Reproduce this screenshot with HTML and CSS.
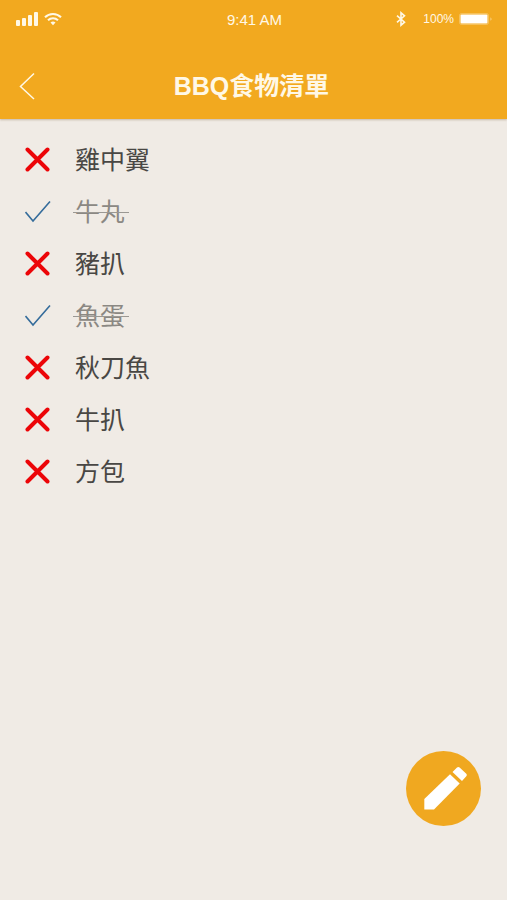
FILE: index.html
```html
<!DOCTYPE html>
<html lang="zh-Hant">
<head>
  <meta charset="utf-8">
  <meta name="viewport" content="width=device-width, initial-scale=1">
  <title>BBQ食物清單</title>
  <link rel="stylesheet" href="styles.css">
</head>
<body>
  <header class="header">
    <div class="status">
      <div class="status-left">
        <svg width="23" height="14" viewBox="0 0 23 14" fill="currentColor" aria-hidden="true">
          <rect x="0" y="8" width="4" height="6" rx="1"/>
          <rect x="6" y="6" width="4" height="8" rx="1"/>
          <rect x="12" y="3" width="4" height="11" rx="1"/>
          <rect x="18" y="0" width="4" height="14" rx="1"/>
        </svg>
        <svg width="18" height="14" viewBox="0 0 18 14" fill="none" stroke="currentColor" stroke-width="2" aria-hidden="true">
          <path d="M1 5.2a11.3 11.3 0 0 1 16 0"/>
          <path d="M4 8.3a7 7 0 0 1 10 0"/>
          <path d="M9 13.2l-2.5-2.6a3.6 3.6 0 0 1 5 0z" fill="currentColor" stroke="none"/>
        </svg>
      </div>
      <time class="clock">9:41 AM</time>
      <div class="status-right">
        <svg class="bluetooth" width="10" height="16" viewBox="0 0 10 16" fill="none" stroke="currentColor" stroke-width="1.6" aria-hidden="true">
          <path d="M1 4.6l7.500 6.600L5 14.200V1.800l3.500 3L1 11.400"/>
        </svg>
        <span class="percent">100%</span>
        <svg width="34" height="12" viewBox="0 0 34 12" aria-hidden="true">
          <rect x=".5" y=".5" width="29" height="11" rx="2" fill="none" stroke="currentColor" stroke-opacity=".3"/>
          <rect x="1.500" y="1.500" width="27" height="9" rx="1" fill="#fff"/>
          <path d="M31.500 4.200q2 1.800 0 3.600z" fill="currentColor" opacity=".6"/>
        </svg>
      </div>
    </div>
    <div class="nav">
      <button class="back" type="button" aria-label="返回">
        <svg width="16" height="28" viewBox="0 0 16 28" fill="none" stroke="currentColor" stroke-width="1.5" aria-hidden="true">
          <path d="M15 1.500L1.500 14.500L15 27"/>
        </svg>
      </button>
      <h1 class="title">BBQ食物清單</h1>
    </div>
  </header>

  <svg class="symbols" aria-hidden="true">
    <symbol id="cross" viewBox="0 0 26 26">
      <path d="M2.500 2.500L22.500 22.500M22.500 2.500L2.500 22.500" fill="none" stroke="#ec0508" stroke-width="4" stroke-linecap="round"/>
    </symbol>
    <symbol id="tick" viewBox="0 0 26 26">
      <path d="M.5 13L8 22L25 2.500" fill="none" stroke="#356c9b" stroke-width="1.600"/>
    </symbol>
  </svg>

  <main>
    <ul class="list">
      <li><label class="item"><span class="mark"><input type="checkbox"><svg><use href="#cross"/></svg></span><span class="name">雞中翼</span></label></li>
      <li><label class="item done"><span class="mark"><input type="checkbox" checked><svg><use href="#tick"/></svg></span><span class="name">牛丸</span></label></li>
      <li><label class="item"><span class="mark"><input type="checkbox"><svg><use href="#cross"/></svg></span><span class="name">豬扒</span></label></li>
      <li><label class="item done"><span class="mark"><input type="checkbox" checked><svg><use href="#tick"/></svg></span><span class="name">魚蛋</span></label></li>
      <li><label class="item"><span class="mark"><input type="checkbox"><svg><use href="#cross"/></svg></span><span class="name">秋刀魚</span></label></li>
      <li><label class="item"><span class="mark"><input type="checkbox"><svg><use href="#cross"/></svg></span><span class="name">牛扒</span></label></li>
      <li><label class="item"><span class="mark"><input type="checkbox"><svg><use href="#cross"/></svg></span><span class="name">方包</span></label></li>
    </ul>
  </main>

  <button class="edit" type="button" aria-label="編輯">
    <svg width="75" height="75" viewBox="0 0 75 75" fill="currentColor" aria-hidden="true">
      <path d="M18.300 48L44 23.300L53.700 32.500L28 58.500H18.300z"/>
      <path d="M46.500 21L51 16.500Q52.300 15.300 53.600 16.500L60.300 22.700Q61.500 24 60.300 25.300L56 30z"/>
    </svg>
  </button>
</body>
</html>
```

FILE: styles.css
```css
* {
  box-sizing: border-box;
}

body {
  margin: 0;
  min-height: 100vh;
  background: #f0ebe5;
  color: #494744;
  font-family: "Liberation Sans", "Noto Sans CJK TC", sans-serif;
}

button {
  padding: 0;
  border: 0;
  background: none;
  color: inherit;
  cursor: pointer;
}

svg {
  display: block;
}

.header {
  background: #f2a91f;
  color: #fff8e6;
  box-shadow: 0 1px 2px rgba(120, 90, 60, 0.35);
}

.status {
  display: grid;
  grid-template-columns: 1fr auto 1fr;
  align-items: center;
  height: 38px;
  padding: 0 14px 0 16px;
}

.status-left,
.status-right {
  display: flex;
  align-items: center;
  gap: 5px;
}

.status-right {
  justify-content: flex-end;
}

.bluetooth {
  margin-right: 12px;
}

.clock {
  font-size: 15px;
}

.percent {
  font-size: 12px;
}

.nav {
  display: grid;
  grid-template-columns: 40px 1fr 44px;
  align-items: center;
  height: 81px;
  padding: 14px 0 0;
}

.back {
  display: flex;
  align-items: center;
  height: 44px;
  padding-left: 19px;
}

.title {
  margin: 0;
  text-align: center;
  font-size: 25px;
  line-height: 36px;
}

.symbols {
  position: absolute;
  width: 0;
  height: 0;
}

.list {
  margin: 0;
  padding: 15px 25px;
  list-style: none;
}

.item {
  display: flex;
  align-items: center;
  gap: 24px;
  height: 52px;
  font-size: 25px;
  line-height: 36px;
}

.mark {
  position: relative;
  width: 26px;
  height: 26px;
}

.mark svg {
  width: 26px;
  height: 26px;
}

.mark input {
  position: absolute;
  inset: 0;
  width: 100%;
  height: 100%;
  margin: 0;
  opacity: 0;
}

.name {
  position: relative;
}

.done .name {
  color: #8b8883;
}

.done .name::after {
  content: "";
  position: absolute;
  top: 50%;
  left: -2px;
  right: -4px;
  height: 1px;
  background: #9b9893;
}

.edit {
  position: fixed;
  right: 26px;
  bottom: 74px;
  width: 75px;
  height: 75px;
  border-radius: 50%;
  background: #f0a820;
  color: #fff;
}
```
